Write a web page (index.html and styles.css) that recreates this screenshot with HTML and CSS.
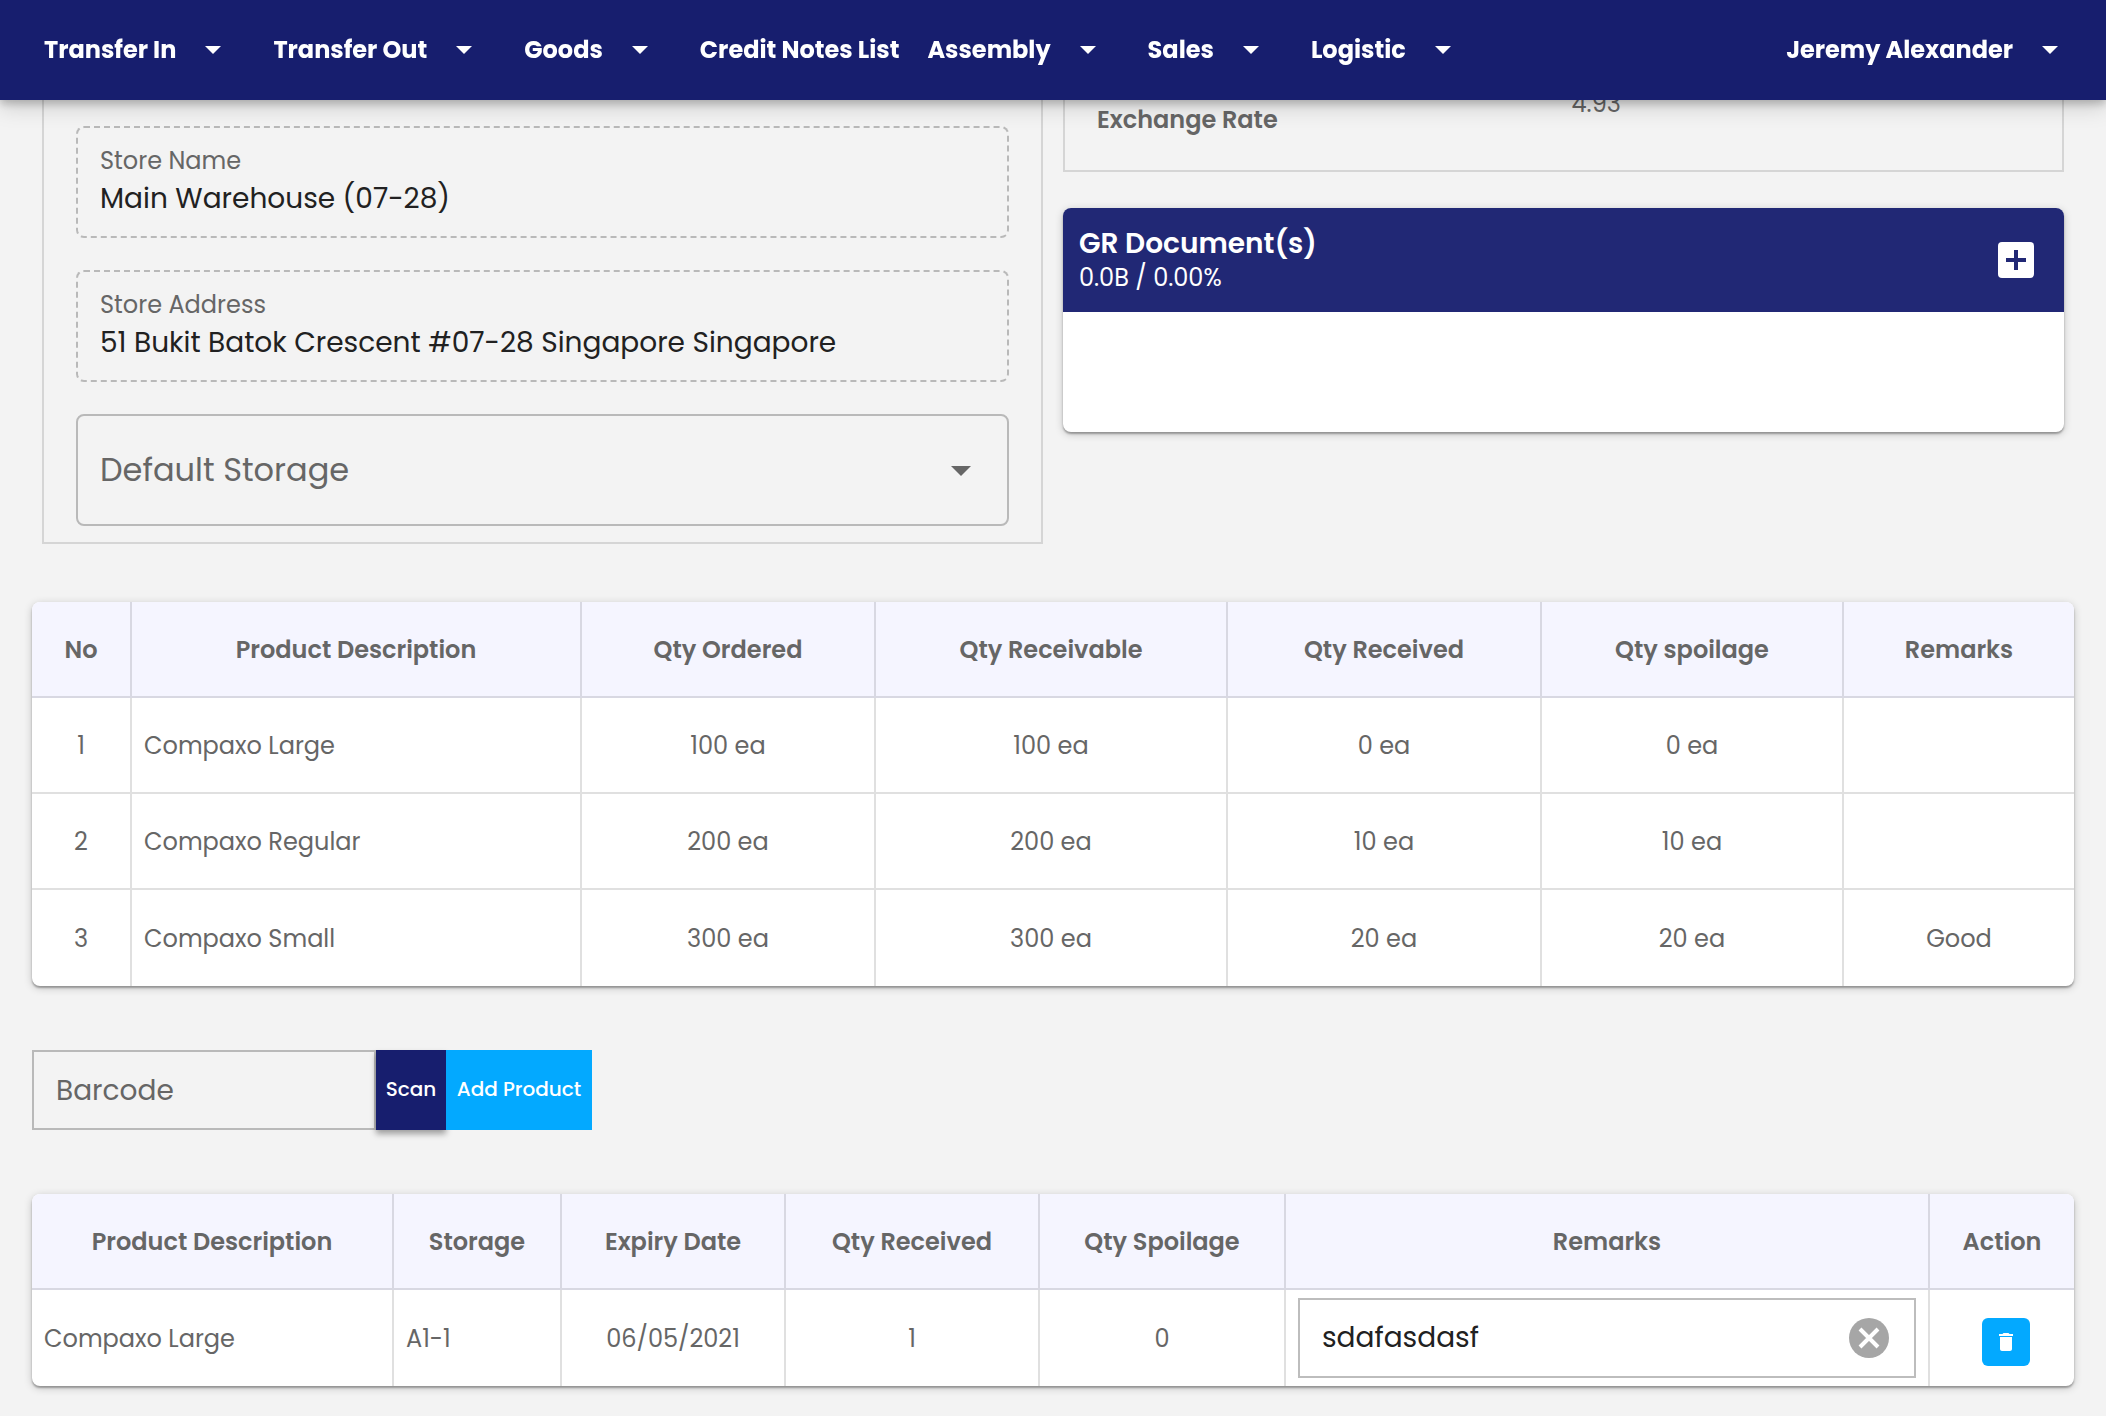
FILE: index.html
```html
<!DOCTYPE html>
<html lang="en">
<head>
    <meta charset="UTF-8">
    <meta name="viewport" content="width=device-width, initial-scale=1.0">
    <title>Goods Receive</title>
    <link rel="stylesheet" href="styles.css">
</head>
<body>
    <!-- Top navigation -->
    <header class="navbar">
        <nav class="nav-menu">
            <button type="button" class="nav-item">Transfer In <span class="caret"></span></button>
            <button type="button" class="nav-item">Transfer Out <span class="caret"></span></button>
            <button type="button" class="nav-item">Goods <span class="caret"></span></button>
            <a href="#" class="nav-item nav-link">Credit Notes List</a>
            <button type="button" class="nav-item">Assembly <span class="caret"></span></button>
            <button type="button" class="nav-item">Sales <span class="caret"></span></button>
            <button type="button" class="nav-item">Logistic <span class="caret"></span></button>
        </nav>
        <button type="button" class="nav-item nav-user">Jeremy Alexander <span class="caret"></span></button>
    </header>

    <main class="content">
        <div class="details">
            <!-- Store details -->
            <section class="panel store-panel">
                <div class="field">
                    <label class="field-label" for="storeName">Store Name</label>
                    <input class="field-input" type="text" id="storeName" value="Main Warehouse (07-28)" readonly>
                </div>
                <div class="field">
                    <label class="field-label" for="storeAddress">Store Address</label>
                    <input class="field-input" type="text" id="storeAddress" value="51 Bukit Batok Crescent #07-28 Singapore Singapore" readonly>
                </div>
                <div class="select-wrap">
                    <select class="select" id="defaultStorage" aria-label="Default Storage">
                        <option>Default Storage</option>
                    </select>
                    <span class="caret select-caret"></span>
                </div>
            </section>

            <div class="side">
                <section class="panel rate-panel">
                    <span class="rate-label">Exchange Rate</span>
                    <span class="rate-value">4.93</span>
                </section>

                <section class="card">
                    <div class="card-header">
                        <div>
                            <h2 class="card-title">GR Document(s)</h2>
                            <p class="card-size">0.0B / 0.00%</p>
                        </div>
                        <button type="button" class="icon-button" aria-label="Add document">
                            <svg width="36" height="36" viewBox="0 0 36 36">
                                <rect width="36" height="36" rx="4" fill="#fff"/>
                                <path d="M16 8h4v8h8v4h-8v8h-4v-8H8v-4h8z" fill="#212875"/>
                            </svg>
                        </button>
                    </div>
                    <div class="card-body"></div>
                </section>
            </div>
        </div>

        <!-- Ordered products -->
        <div class="table-card ordered">
            <table class="table">
                <colgroup>
                    <col class="col-no">
                    <col class="col-product">
                    <col class="col-ordered">
                    <col class="col-receivable">
                    <col class="col-received">
                    <col class="col-spoilage">
                    <col class="col-remarks">
                </colgroup>
                <thead>
                    <tr>
                        <th>No</th>
                        <th>Product Description</th>
                        <th>Qty Ordered</th>
                        <th>Qty Receivable</th>
                        <th>Qty Received</th>
                        <th>Qty spoilage</th>
                        <th>Remarks</th>
                    </tr>
                </thead>
                <tbody>
                    <tr>
                        <td>1</td>
                        <td class="left">Compaxo Large</td>
                        <td>100 ea</td>
                        <td>100 ea</td>
                        <td>0 ea</td>
                        <td>0 ea</td>
                        <td></td>
                    </tr>
                    <tr>
                        <td>2</td>
                        <td class="left">Compaxo Regular</td>
                        <td>200 ea</td>
                        <td>200 ea</td>
                        <td>10 ea</td>
                        <td>10 ea</td>
                        <td></td>
                    </tr>
                    <tr>
                        <td>3</td>
                        <td class="left">Compaxo Small</td>
                        <td>300 ea</td>
                        <td>300 ea</td>
                        <td>20 ea</td>
                        <td>20 ea</td>
                        <td>Good</td>
                    </tr>
                </tbody>
            </table>
        </div>

        <!-- Barcode scanner -->
        <form class="barcode-form">
            <input class="barcode-input" type="text" id="barcode" placeholder="Barcode" aria-label="Barcode">
            <button type="button" class="btn btn-scan">Scan</button>
            <button type="button" class="btn btn-add">Add Product</button>
        </form>

        <!-- Received products -->
        <div class="table-card">
            <table class="table">
                <colgroup>
                    <col class="col-item">
                    <col class="col-storage">
                    <col class="col-expiry">
                    <col class="col-item-received">
                    <col class="col-item-spoilage">
                    <col class="col-item-remarks">
                    <col class="col-action">
                </colgroup>
                <thead>
                    <tr>
                        <th>Product Description</th>
                        <th>Storage</th>
                        <th>Expiry Date</th>
                        <th>Qty Received</th>
                        <th>Qty Spoilage</th>
                        <th>Remarks</th>
                        <th>Action</th>
                    </tr>
                </thead>
                <tbody>
                    <tr>
                        <td class="left">Compaxo Large</td>
                        <td class="left">A1-1</td>
                        <td>06/05/2021</td>
                        <td>1</td>
                        <td>0</td>
                        <td class="control">
                            <div class="remarks-box">
                                <input class="remarks-input" type="text" id="remarks" value="sdafasdasf" aria-label="Remarks">
                                <button type="button" class="icon-button" aria-label="Clear remarks">
                                    <svg width="40" height="40" viewBox="0 0 40 40">
                                        <circle cx="20" cy="20" r="20" fill="#a6a6a6"/>
                                        <path d="M11 11l18 18M29 11l-18 18" stroke="#fff" stroke-width="4"/>
                                    </svg>
                                </button>
                            </div>
                        </td>
                        <td class="action">
                            <button type="button" class="btn-delete" aria-label="Delete">
                                <svg width="24" height="24" viewBox="0 0 24 24" fill="#fff">
                                    <path d="M6 19c0 1.100.9 2 2 2h8c1.100 0 2-.9 2-2V7H6v12zM19 4h-3.500l-1-1h-5l-1 1H5v2h14V4z"/>
                                </svg>
                            </button>
                        </td>
                    </tr>
                </tbody>
            </table>
        </div>
    </main>
</body>
</html>
```

FILE: styles.css
```css
* {
    box-sizing: border-box;
}

body {
    font-family: Poppins, Inter, sans-serif;
    font-size: 24px;
    line-height: 32px;
    background-color: #f3f3f3;
    color: #666;
    margin: 0;
}

button, input, select {
    font-family: inherit;
    margin: 0;
}

/* Navigation */
.navbar {
    position: fixed;
    top: 0;
    left: 0;
    right: 0;
    z-index: 10;
    display: flex;
    justify-content: space-between;
    align-items: center;
    height: 100px;
    padding: 0 48px 0 44px;
    background-color: #171e6e;
    box-shadow: 0 4px 8px rgba(0, 0, 0, 0.2), 0 8px 20px rgba(0, 0, 0, 0.15);
}

.nav-menu {
    display: flex;
    align-items: center;
    gap: 52px;
}

.nav-item {
    display: flex;
    align-items: center;
    gap: 29px;
    padding: 0;
    border: none;
    background: none;
    color: #fff;
    font-size: 24px;
    font-weight: 700;
    line-height: 32px;
    text-decoration: none;
    white-space: nowrap;
    cursor: pointer;
}

.nav-link {
    margin-right: -24px;
}

.caret {
    border: 8px solid transparent;
    border-top-color: currentColor;
    border-bottom: none;
}

/* Details */
.content {
    padding: 80px 32px 28px;
}

.details {
    display: grid;
    grid-template-columns: 1fr 1fr;
    align-items: start;
    gap: 20px;
    padding: 0 10px;
}

.panel {
    border: 2px solid #d5d5d5;
    border-top: none;
}

.store-panel {
    display: flex;
    flex-direction: column;
    gap: 32px;
    padding: 46px 32px 16px;
}

.field {
    display: flex;
    flex-direction: column;
    height: 112px;
    padding: 15px 22px 0;
    border: 2px dashed #b9b9b9;
    border-radius: 8px;
}

.field-label {
    line-height: 36px;
}

.field-input {
    width: 100%;
    height: 40px;
    padding: 0;
    border: none;
    outline: none;
    background: none;
    color: #212121;
    font-size: 28px;
}

.select-wrap {
    display: grid;
    align-items: center;
}

.select {
    grid-area: 1 / 1;
    width: 100%;
    height: 112px;
    padding: 0 22px 2px;
    border: 2px solid #b9b9b9;
    border-radius: 8px;
    background: none;
    color: #666;
    font-size: 32px;
    appearance: none;
}

.select-caret {
    grid-area: 1 / 1;
    justify-self: end;
    margin: 2px 38px 0 0;
    border-width: 10px;
    border-bottom: none;
    pointer-events: none;
}

.side {
    display: flex;
    flex-direction: column;
    gap: 36px;
}

.rate-panel {
    display: grid;
    grid-template-columns: 1fr 1fr;
    height: 92px;
    padding: 8px 32px;
}

.rate-label {
    padding-top: 16px;
    font-weight: 600;
}

.rate-value {
    padding-left: 8px;
}

.card {
    border-radius: 8px;
    background-color: #fff;
    box-shadow: 0 2px 2px rgba(0, 0, 0, 0.3), 0 2px 8px rgba(0, 0, 0, 0.2);
    overflow: hidden;
}

.card-header {
    display: flex;
    justify-content: space-between;
    align-items: center;
    height: 104px;
    padding: 0 30px 0 16px;
    background-color: #212875;
    color: #fff;
}

.card-title {
    margin: 0;
    font-size: 28px;
    font-weight: 600;
    line-height: 36px;
}

.card-size {
    margin: 0;
}

.card-body {
    height: 120px;
}

.icon-button {
    display: flex;
    padding: 0;
    border: none;
    background: none;
    cursor: pointer;
}

/* Tables */
.table-card {
    margin-top: 64px;
    border-radius: 8px;
    background-color: #fff;
    box-shadow: 0 2px 2px rgba(0, 0, 0, 0.3), 0 2px 8px rgba(0, 0, 0, 0.2);
    overflow: hidden;
}

.ordered {
    margin-top: 58px;
}

.table {
    width: 100%;
    table-layout: fixed;
    border-collapse: separate;
    border-spacing: 0;
}

.table th, .table td {
    height: 96px;
    padding: 2px 12px 0;
    border-right: 2px solid #e0e0e0;
    border-bottom: 2px solid #e0e0e0;
    text-align: center;
}

.table th {
    background-color: #f5f5ff;
    border-color: #d8d8e2;
    font-weight: 600;
}

.table th:last-child, .table td:last-child {
    border-right: none;
}

.table tr:last-child td {
    border-bottom: none;
}

.table .left {
    text-align: left;
}

.table .control {
    padding-top: 0;
}

.table .action {
    padding: 8px 12px 0 20px;
}

.col-no { width: 100px; }
.col-product { width: 450px; }
.col-ordered { width: 294px; }
.col-receivable { width: 352px; }
.col-received { width: 314px; }
.col-spoilage { width: 302px; }
.col-remarks { width: 230px; }

.col-item { width: 362px; }
.col-storage { width: 168px; }
.col-expiry { width: 224px; }
.col-item-received { width: 254px; }
.col-item-spoilage { width: 246px; }
.col-item-remarks { width: 644px; }
.col-action { width: 144px; }

/* Barcode */
.barcode-form {
    display: flex;
    margin-top: 64px;
}

.barcode-input {
    width: 344px;
    height: 80px;
    padding: 2px 22px 0;
    border: 2px solid #b9b9b9;
    background: none;
    font-size: 28px;
}

.barcode-input::placeholder {
    color: #666;
}

.btn {
    padding: 0 8px 2px;
    border: none;
    color: #fff;
    font-size: 20px;
    font-weight: 500;
    cursor: pointer;
}

.btn-scan {
    min-width: 70px;
    background-color: #171e6e;
    box-shadow: 0 4px 6px rgba(0, 0, 0, 0.35);
}

.btn-add {
    z-index: 1;
    min-width: 146px;
    background-color: #03a9ff;
}

.remarks-box {
    display: flex;
    align-items: center;
    height: 80px;
    padding: 0 25px 0 22px;
    border: 2px solid #bdbdbd;
}

.remarks-input {
    flex: 1;
    min-width: 0;
    padding: 0;
    border: none;
    outline: none;
    background: none;
    color: #212121;
    font-size: 28px;
}

.btn-delete {
    display: inline-flex;
    justify-content: center;
    align-items: center;
    width: 48px;
    height: 48px;
    padding: 0;
    border: none;
    border-radius: 6px;
    background-color: #03a9ff;
    vertical-align: middle;
    cursor: pointer;
}
```
